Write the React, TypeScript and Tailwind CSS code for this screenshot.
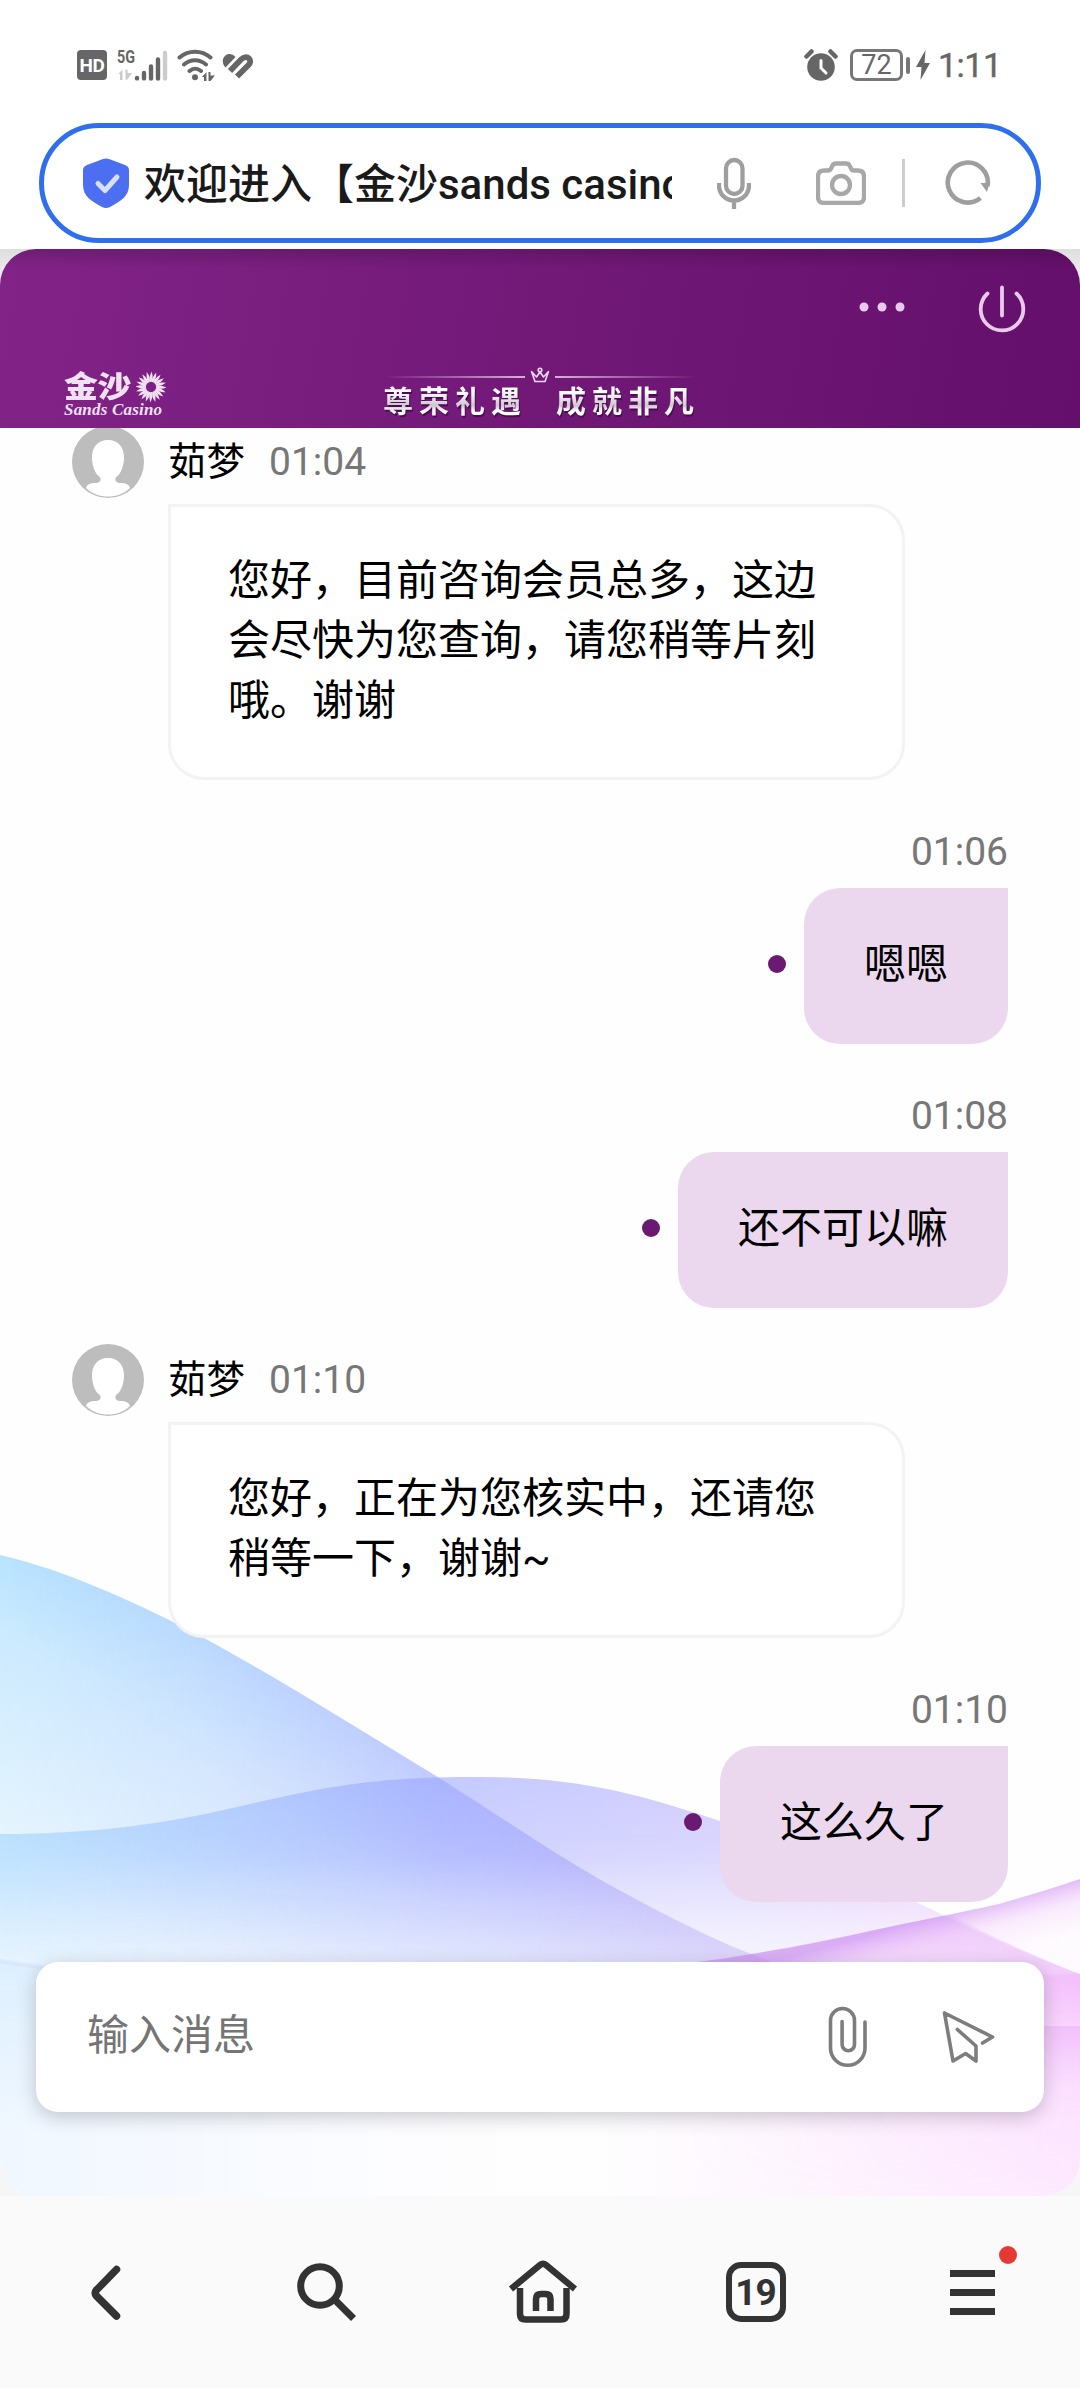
import clsx from "clsx";

type Message = {
  id: number;
  from: "agent" | "me";
  time: string;
  lines: string[];
};

const AGENT_NAME = "茹梦";

const messages: Message[] = [
  {
    id: 1,
    from: "agent",
    time: "01:04",
    lines: ["您好，目前咨询会员总多，这边", "会尽快为您查询，请您稍等片刻", "哦。谢谢"],
  },
  { id: 2, from: "me", time: "01:06", lines: ["嗯嗯"] },
  { id: 3, from: "me", time: "01:08", lines: ["还不可以嘛"] },
  {
    id: 4,
    from: "agent",
    time: "01:10",
    lines: ["您好，正在为您核实中，还请您", "稍等一下，谢谢~"],
  },
  { id: 5, from: "me", time: "01:10", lines: ["这么久了"] },
];

const StatusBar = () => (
  <div className="flex h-[123px] items-start justify-between pt-[49px] pr-[80px] pl-[77px] text-[#666]">
    <div className="flex h-8 items-center">
      <div className="flex h-[30px] w-[30px] items-center justify-center rounded-[4px] bg-[#666] text-[19px] leading-none font-bold tracking-[-0.5px] text-white">
        HD
      </div>
      <svg className="ml-[10px] overflow-visible" width="52" height="32" viewBox="0 0 52 32">
        <text x="0" y="14" fontSize="19" fontWeight="700" fill="#666" textLength="18" lengthAdjust="spacingAndGlyphs">
          5G
        </text>
        <path d="M1 25L5.500 20.500V31H3V25zM8.500 20.500h2V24H15L10.500 30.500H8.500z" fill="#ccc" />
        <g strokeWidth="4.4" strokeLinecap="round" stroke="#666">
          <path d="M20 29v.4M27 24v5.4M34 17.500v12M41 10.500v19" />
          <path d="M48 4v25.500" stroke="#ccc" />
        </g>
      </svg>
      <svg className="ml-2" width="38" height="32" viewBox="0 0 38 32" fill="none" stroke="#666" strokeWidth="4" strokeLinecap="round">
        <path d="M2.500 8.500C11.500 .8 24.500 .8 33.500 8.500M7 15.500c6.500-5.600 15.500-5.600 22 0M12.500 22c3.500-3 8-3 11.500 0" />
        <circle cx="18" cy="28.300" r="3" fill="#666" stroke="none" />
        <path d="M25 28l4.500-5v9H27v-4zM31.500 23h2v3.500H38L33.500 32h-2z" fill="#666" stroke="none" />
      </svg>
      <svg className="ml-[7px]" width="32" height="32" viewBox="0 0 32 32" fill="none">
        <path d="M3.500 18.500C0 15 0 9.500 3 7C6 4 10.500 4.500 13.500 8Z" fill="#666" />
        <path d="M8 22L19 10.500C21.500 8 25 7.500 27 9.500S28.500 14 26.500 16L15 27.500" stroke="#666" strokeWidth="5.800" />
      </svg>
    </div>
    <div className="flex h-8 items-center">
      <svg width="34" height="32" viewBox="0 0 34 32">
        <circle cx="17" cy="18" r="13.800" fill="#666" />
        <path d="M2.500 7.500l5-5M31.500 7.500l-5-5" stroke="#666" strokeWidth="4.500" strokeLinecap="round" />
        <path d="M17 11.500v7.500l5 5" stroke="#fff" strokeWidth="3" fill="none" strokeLinecap="round" />
      </svg>
      <div className="ml-3 flex h-8 w-[53px] items-center justify-center rounded-[7px] border-[3px] border-[#777] text-[27px] leading-none">
        72
      </div>
      <div className="ml-[3px] h-[17px] w-1 rounded-full bg-[#777]" />
      <svg className="ml-[6px]" width="14" height="30" viewBox="0 0 14 30">
        <path d="M9.500 0L0 17h5.500L4.500 30L14 13H8.500z" fill="#666" />
      </svg>
      <div className="ml-2 w-[62px] text-[34px] leading-8 tracking-[-0.5px] whitespace-nowrap [-webkit-text-stroke:0.4px_#666]">1:11</div>
    </div>
  </div>
);

const AddressBar = () => (
  <div className="mx-[39px] flex h-[120px] items-center rounded-full border-[5px] border-[#2f6fed] bg-white pl-[39px]">
    <svg width="46" height="50" viewBox="0 0 46 50">
      <path
        d="M20 1q3-1 6 0l16 6q4 1.500 4 5v15c0 11-8 16-19 22q-4 2-8 0C8 43 0 38 0 27V12q0-3.500 4-5z"
        fill="#4c6ef0"
      />
      <path d="M15 25.500l7 7L34 19" fill="none" stroke="#d7dffc" strokeWidth="5" strokeLinecap="round" strokeLinejoin="round" />
    </svg>
    <div className="mt-1 ml-[15px] w-[528px] overflow-hidden text-[42px] leading-[60px] font-medium whitespace-nowrap text-[#1a1a1a]">
      欢迎进入【金沙sands casino】
    </div>
    <div className="flex items-center text-[#9e9e9e]">
      <svg className="ml-[45px]" width="34" height="52" viewBox="0 0 34 52" fill="none" stroke="currentColor" strokeWidth="4.300">
        <rect x="9" y="3" width="16.500" height="34" rx="8.250" />
        <path d="M2 26v2.500a15 15 0 0 0 30 0V26M17 44v8" />
      </svg>
      <svg className="ml-[65px]" width="50" height="44" viewBox="0 0 50 44" fill="none" stroke="#a8a8a8" strokeWidth="4.300" strokeLinejoin="round">
        <path d="M8 9.500h4q2 0 3-2l1.500-3Q17.500 2.500 20 2.500h10q2.500 0 3.500 2L35 7.500q1 2 3 2h4q6 0 6 6V36q0 6-6 6H8q-6 0-6-6V15.500q0-6 6-6z" />
        <circle cx="25" cy="24" r="9" />
      </svg>
      <div className="ml-9 h-12 w-[3px] bg-[#ccc]" />
      <svg className="ml-[39px]" width="48" height="48" viewBox="0 0 48 48">
        <path d="M36.500 39A20 20 0 1 1 43.500 27" fill="none" stroke="currentColor" strokeWidth="4.600" />
        <path d="M36.500 24h9l-2.500 9z" fill="currentColor" />
      </svg>
    </div>
  </div>
);

const SunLogo = () => (
  <svg width="30" height="32" viewBox="-15 -16 30 32">
    {Array.from({ length: 20 }, (_, i) => (
      <path key={i} d="M0-5Q3-9 .5-15.500Q-2.200-9-1.500-5z" fill="#f0e2f2" transform={`rotate(${i * 18})`} />
    ))}
  </svg>
);

const Header = () => (
  <header className="relative flex h-[179px] flex-col justify-between bg-linear-[100deg] from-[#822388] via-[#721978] to-[#640f6b]">
    <div className="absolute inset-x-0 top-0 h-5 bg-linear-to-b from-black/15 to-transparent" />
    <div className="flex justify-end pt-[35px] pr-[53px]">
      <svg className="mt-[14px]" width="46" height="18" viewBox="0 0 46 18" fill="#e8cbec">
        <circle cx="5" cy="9" r="4.500" />
        <circle cx="23" cy="9" r="4.500" />
        <circle cx="41" cy="9" r="4.500" />
      </svg>
      <svg className="ml-[72px]" width="50" height="50" viewBox="0 0 50 50" fill="none" stroke="#e8cbec" strokeWidth="3.800" strokeLinecap="round">
        <path d="M10.500 9.500a21.300 21.300 0 1 0 29 0M25 3.500v28" />
      </svg>
    </div>
    <div className="grid grid-cols-[320px_1fr] items-end pb-2 pl-16">
      <div className="flex flex-col pb-[3px] text-[#f0e2f2]">
        <div className="flex h-[31px] items-center">
          <span className="w-[72px] scale-y-[0.88] text-[34px] leading-[31px] font-black tracking-[-0.5px]">金沙</span>
          <SunLogo />
        </div>
        <span className="h-[15px] font-['Liberation_Serif',serif] text-[17px] leading-[15px] font-bold tracking-[0.2px] whitespace-nowrap italic">
          Sands Casino
        </span>
      </div>
      <div className="w-[312px]">
        <div className="flex h-[15px] items-center">
          <div className="mt-1 h-0.5 flex-1 bg-linear-to-r from-transparent to-[#d9addd]" />
          <svg className="mx-[5px]" width="20" height="16" viewBox="0 0 20 16" fill="none" stroke="#ecd8ee" strokeWidth="1.600">
            <path d="M1.500 4.500L5 14.500h10l3.500-10L13.500 10L10 5L6.500 10z" strokeLinejoin="round" />
            <circle cx="10" cy="3" r="1.800" />
          </svg>
          <div className="mt-1 h-0.5 flex-1 bg-linear-to-l from-transparent to-[#d9addd]" />
        </div>
        <div className="mt-0.5 -ml-px flex h-9 gap-[29px] bg-linear-to-b from-white from-20% via-[#cfc6d0] via-60% to-white to-75% bg-clip-text text-[30px] leading-9 font-bold tracking-[6px] whitespace-nowrap text-transparent drop-shadow-[1px_2px_0_#4a0b50]">
          <span>尊荣礼遇</span>
          <span>成就非凡</span>
        </div>
      </div>
    </div>
  </header>
);

const Waves = () => (
  <svg className="absolute inset-x-0 bottom-0" width="1080" height="696" viewBox="0 1500 1080 696">
    <defs>
      <linearGradient id="a-fill" gradientUnits="userSpaceOnUse" x1="0" y1="0" x2="800" y2="0">
        <stop offset="0" stopColor="#9cd8ff" />
        <stop offset=".25" stopColor="#a4ccff" stopOpacity=".9" />
        <stop offset=".55" stopColor="#a4b2ff" stopOpacity=".8" />
        <stop offset="1" stopColor="#a890f0" stopOpacity=".6" />
      </linearGradient>
      <linearGradient id="a-fade" gradientUnits="userSpaceOnUse" x1="441" y1="1779" x2="290" y2="2021">
        <stop offset="0" stopColor="#fff" stopOpacity=".85" />
        <stop offset=".4" stopColor="#fff" stopOpacity=".5" />
        <stop offset="1" stopColor="#fff" stopOpacity=".24" />
      </linearGradient>
      <linearGradient id="b-fill" gradientUnits="userSpaceOnUse" x1="0" y1="0" x2="1080" y2="0">
        <stop offset="0" stopColor="#90ccff" />
        <stop offset=".4" stopColor="#98a4ff" />
        <stop offset=".68" stopColor="#b4aaff" />
        <stop offset=".85" stopColor="#d29cf8" />
        <stop offset="1" stopColor="#e690f8" />
      </linearGradient>
      <linearGradient id="b-fade" gradientUnits="userSpaceOnUse" x1="0" y1="1777" x2="0" y2="1980">
        <stop offset="0" stopColor="#fff" stopOpacity=".58" />
        <stop offset=".28" stopColor="#fff" stopOpacity=".5" />
        <stop offset=".6" stopColor="#fff" stopOpacity=".34" />
        <stop offset="1" stopColor="#fff" stopOpacity=".12" />
      </linearGradient>
      <linearGradient id="c-fill" gradientUnits="userSpaceOnUse" x1="930" y1="1918" x2="945" y2="1972">
        <stop offset="0" stopColor="#c684f0" stopOpacity=".6" />
        <stop offset=".45" stopColor="#ecb0fa" stopOpacity=".25" />
        <stop offset="1" stopColor="#f6c8fd" stopOpacity=".05" />
      </linearGradient>
      <linearGradient id="pink-fill" gradientUnits="userSpaceOnUse" x1="0" y1="1905" x2="0" y2="2196">
        <stop offset="0" stopColor="#d79cf9" stopOpacity=".25" />
        <stop offset=".26" stopColor="#ec9efa" stopOpacity=".5" />
        <stop offset=".42" stopColor="#f0a8fa" stopOpacity=".3" />
        <stop offset=".65" stopColor="#f5b8ff" stopOpacity=".15" />
        <stop offset="1" stopColor="#f8c8ff" stopOpacity="0" />
      </linearGradient>
      <linearGradient id="pink-side" gradientUnits="userSpaceOnUse" x1="680" y1="0" x2="1080" y2="0">
        <stop offset="0" stopColor="#fff" stopOpacity="0" />
        <stop offset=".35" stopColor="#fff" stopOpacity=".25" />
        <stop offset="1" stopColor="#fff" />
      </linearGradient>
      <linearGradient id="step-fill" x1="0" y1="0" x2="0" y2="1">
        <stop offset="0" stopColor="#e8a4f6" stopOpacity=".4" />
        <stop offset="1" stopColor="#f0b8fa" stopOpacity="0" />
      </linearGradient>
      <linearGradient id="floor" x1="0" y1="0" x2="1" y2="0">
        <stop offset="0" stopColor="#f0f7ff" />
        <stop offset=".38" stopColor="#fdfdff" />
        <stop offset=".55" stopColor="#fefefe" />
        <stop offset="1" stopColor="#fde9ff" />
      </linearGradient>
      <linearGradient id="end-fade" gradientUnits="userSpaceOnUse" x1="0" y1="1860" x2="0" y2="2130">
        <stop offset="0" stopColor="#fff" />
        <stop offset="1" stopColor="#fff" stopOpacity="0" />
      </linearGradient>
      <mask id="a-mask" maskUnits="userSpaceOnUse" x="0" y="1500" width="1080" height="700">
        <rect x="0" y="1500" width="1080" height="700" fill="url(#a-fade)" />
      </mask>
      <mask id="b-mask" maskUnits="userSpaceOnUse" x="0" y="1500" width="1080" height="700">
        <rect x="0" y="1500" width="1080" height="700" fill="url(#b-fade)" />
      </mask>
      <mask id="pink-mask" maskUnits="userSpaceOnUse" x="0" y="1500" width="1080" height="700">
        <rect x="0" y="1500" width="1080" height="700" fill="url(#pink-side)" />
      </mask>
      <mask id="end-mask" maskUnits="userSpaceOnUse" x="0" y="1500" width="1080" height="700">
        <rect x="0" y="1500" width="1080" height="700" fill="url(#end-fade)" />
      </mask>
    </defs>
    <path d="M0 1961Q25 1965 48 1968L1080 1974V2196H0z" fill="url(#floor)" />
    <g mask="url(#end-mask)">
      <path
        d="M0 1555C65 1570 130 1600 193 1632C275 1676 360 1730 441 1779C495 1813 545 1848 599 1879C650 1907 700 1934 751 1954L860 1995L900 2196H0z"
        fill="url(#a-fill)"
        mask="url(#a-mask)"
      />
      <path
        d="M0 1834C90 1834 160 1825 241 1806C320 1788 375 1776 482 1777C585 1777 650 1798 720 1821C790 1846 850 1872 916 1902C975 1930 1025 1955 1080 1974V2196H0z"
        fill="url(#b-fill)"
        mask="url(#b-mask)"
      />
      <path d="M0 1961Q25 1965 48 1968L100 1972" fill="none" stroke="#b0d4fb" strokeWidth="4" opacity=".5" />
    </g>
    <path d="M690 1963C720 1959 735 1957 751 1954C790 1948 825 1941 861 1933C915 1921 955 1914 999 1904Q1045 1891 1080 1879V2000H690z" fill="url(#c-fill)" />
    <g mask="url(#pink-mask)">
      <path d="M680 1964C720 1959 735 1957 751 1954C830 1940 890 1926 950 1915C995 1938 1035 1957 1080 1974V2196H680z" fill="url(#pink-fill)" />
    </g>
    <path d="M1030 2026H1080V2090H1030z" fill="url(#step-fill)" />
  </svg>
);

const Avatar = () => (
  <svg width="72" height="72" viewBox="0 0 72 72">
    <circle cx="36" cy="36" r="36" fill="#bdbdbd" />
    <path
      d="M36 14C25 14 20 22 20 31c0 9 3 17 8 20 2 4-1 6-5 6-4 0-8 1-9 5C20 68 28 70.500 36 70.500S52 68 58 62c-1-4-5-5-9-5-4 0-7-2-5-6 5-3 8-11 8-20 0-9-5-17-16-17z"
      fill="#fff"
    />
  </svg>
);

const ChatMessage = ({ message }: { message: Message }) => {
  const mine = message.from === "me";
  return (
    <div className={clsx("flex flex-col", mine ? "items-end" : "items-start")}>
      <div className="flex h-[72px] items-center text-[39px] leading-[60px]">
        {!mine && (
          <>
            <Avatar />
            <span className="ml-6 text-[38.500px] text-black">{AGENT_NAME}</span>
          </>
        )}
        <span className={clsx("text-[#777]", !mine && "ml-6")}>{message.time}</span>
      </div>
      <div className="flex items-center">
        {mine && <div className="mr-[18px] mb-1 h-[18px] w-[18px] rounded-full bg-[#6b1a72]" />}
        <div
          className={clsx(
            "text-[42px] leading-[60px] whitespace-nowrap text-black",
            mine
              ? "rounded-[36px] rounded-tr-none bg-[#ecd8ee] px-[60px] pt-[47px] pb-[49px]"
              : "mt-1.5 ml-24 w-[737px] rounded-[36px] rounded-tl-none border-[3px] border-[#f3f3f3] bg-white px-[57px] pt-[44px] pb-[46px]"
          )}
        >
          {message.lines.map((line) => (
            <p key={line}>{line}</p>
          ))}
        </div>
      </div>
    </div>
  );
};

const Composer = () => (
  <div className="mx-9 flex h-[150px] items-center rounded-[22px] bg-white pr-[48px] pl-[51px] shadow-[0_5px_20px_rgba(0,0,0,0.2)]">
    <span className="mb-0.5 flex-1 text-[42px] leading-[60px] text-[#757575]">输入消息</span>
    <svg width="40" height="62" viewBox="829 2006 40 62" fill="none" stroke="#7d7d7d" strokeWidth="3.600" strokeLinecap="round">
      <path d="M866 2022V2048a17.250 17.250 0 0 1-34.500 0V2020.500a12 12 0 0 1 24 0V2044.500a6.200 6.200 0 0 1-12.400 0V2021.500" />
    </svg>
    <svg className="ml-[73px]" width="55" height="54" viewBox="942 2010 55 54" fill="none" stroke="#7d7d7d" strokeWidth="3.600" strokeLinecap="round" strokeLinejoin="round">
      <path d="M983.500 2043L993.500 2037L945.500 2013L954 2061L966.600 2053.500L977 2061V2046L958.400 2029.500" />
    </svg>
  </div>
);

const NavBar = () => (
  <nav className="grid h-48 grid-cols-5 items-center justify-items-center bg-[#fafafa] text-[#333]">
    <svg width="70" height="70" viewBox="73 2257 70 70" fill="none" stroke="currentColor" strokeWidth="7.500" strokeLinecap="round" strokeLinejoin="round">
      <path d="M116.500 2269.500L96.500 2290q-2.500 3 0 6L116.500 2316" />
    </svg>
    <svg width="70" height="70" viewBox="289 2257 70 70" fill="none" stroke="currentColor" strokeWidth="7">
      <circle cx="320" cy="2286" r="19.300" />
      <path d="M334 2299L353.500 2318.500" />
    </svg>
    <svg width="74" height="70" viewBox="503 2257 74 70" fill="none" stroke="currentColor" strokeWidth="6.500" strokeLinejoin="round">
      <path d="M511 2289L540 2265q3-2.500 6 0L575 2289" />
      <path d="M520 2288V2314q0 5.500 5.500 5.500H561q5.500 0 5.500-5.500V2288M536 2311V2299q0-5 5-5h4.500q5 0 5 5V2311" />
    </svg>
    <div className="mr-px flex h-[60px] w-[60px] items-center justify-center rounded-[15px] border-[6px] border-[#333] text-[37px] leading-none font-bold tracking-[-1px]">
      19
    </div>
    <div className="relative mt-px flex flex-col gap-3">
      <div className="h-[7px] w-[45px] bg-[#333]" />
      <div className="h-[7px] w-[45px] bg-[#333]" />
      <div className="h-[7px] w-[45px] bg-[#333]" />
      <div className="absolute -top-[24px] -right-[22px] h-[18px] w-[18px] rounded-full bg-[#e53935]" />
    </div>
  </nav>
);

export default function App() {
  return (
    <div className="flex h-[2388px] w-[1080px] flex-col overflow-hidden bg-white font-['Roboto','Noto_Sans_CJK_SC',sans-serif]">
      <StatusBar />
      <AddressBar />
      <div className="mt-1.5 flex-1 bg-linear-to-b from-[#dedede] to-[#f6f6f6] to-2%">
        <div className="relative flex h-full flex-col overflow-hidden rounded-[36px] bg-[#fefefe]">
          <Waves />
          <Header />
          <div className="relative flex flex-1 flex-col overflow-hidden px-[72px]">
            <div className="-mt-0.5 flex flex-col gap-9">
              {messages.map((message) => (
                <ChatMessage key={message.id} message={message} />
              ))}
            </div>
          </div>
          <div className="relative pb-[84px]">
            <Composer />
          </div>
        </div>
      </div>
      <NavBar />
    </div>
  );
}
